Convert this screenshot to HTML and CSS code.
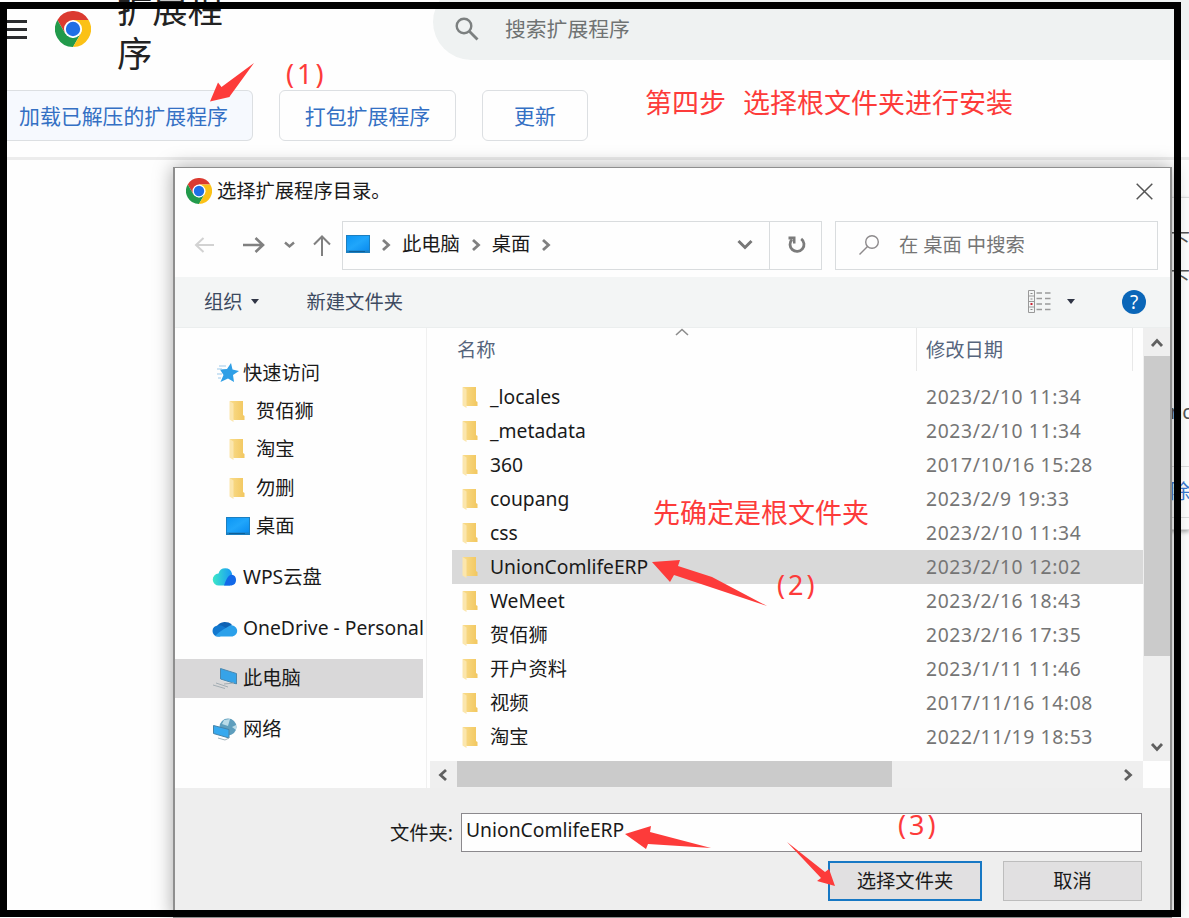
FILE: index.html
```html
<!DOCTYPE html>
<html lang="zh-CN">

<head>
    <meta charset="UTF-8">
    <meta name="viewport" content="width=device-width, initial-scale=1.0">
    <title>扩展程序</title>
    <link rel="stylesheet" href="styles.css">
</head>

<body>

<svg class="sprite">
    <linearGradient id="gold" x1="0" x2="1"><stop offset="0" stop-color="#f9dc8b"/><stop offset="1" stop-color="#f2c75f"/></linearGradient>
    <linearGradient id="sky" x1="0" x2="1" y2="1"><stop offset="0" stop-color="#0c96f4"/><stop offset=".5" stop-color="#20a6fb"/><stop offset="1" stop-color="#0a8cf0"/></linearGradient>
    <linearGradient id="wps" x1="0" x2="1"><stop offset="0" stop-color="#3ce8c8"/><stop offset="1" stop-color="#1899f5"/></linearGradient>
    <symbol id="chrome" viewBox="0 0 48 48">
        <path fill="#db3a30" d="M3.2 12A24 24 0 0 1 44.8 12L24 12L13.6 30Z"/>
        <path fill="#229a4b" d="M3.2 12L13.6 30L24 36L34.4 30L24 48A24 24 0 0 1 3.2 12Z"/>
        <path fill="#fbc116" d="M44.8 12A24 24 0 0 1 24 48L34.4 30L36 24L24 12Z"/>
        <circle cx="24" cy="24" r="12" fill="#fff"/>
        <circle cx="24" cy="24" r="9.6" fill="#1f6fe5"/>
    </symbol>
    <symbol id="folder" viewBox="0 0 16 22">
        <path fill="url(#gold)" d="M1 1H14V15L15.5 16V20H5L1 19Z"/>
        <path fill="#fbe6ad" d="M.5 1L4.5 3.5V22L.5 19.5Z"/>
    </symbol>
    <symbol id="desktop" viewBox="0 0 24 18">
        <path fill="#1c7fc0" d="M0 0H24V18H0Z"/>
        <path fill="url(#sky)" d="M1 1H23V15.5H1Z"/>
        <path fill="#0e5f98" d="M3 16H19V17H3Z"/>
    </symbol>
    <symbol id="chev" viewBox="0 0 10 14"><path d="M2 2L7.5 7L2 12" fill="none" stroke="currentColor" stroke-width="2.8"/></symbol>
</svg>

<div class="page">
    <header>
        <svg class="menu" viewBox="0 0 20 20"><path d="M0 1.5H20M0 9.5H20M0 17.500H20" stroke="#2b2c2e" stroke-width="2.8"/></svg>
        <svg class="logo"><use href="#chrome"/></svg>
        <h1>扩展程序</h1>
        <div class="page-search">
            <svg viewBox="0 0 24 24"><circle cx="9" cy="9" r="7.3" fill="none" stroke="#7c8080" stroke-width="2.4"/><path d="M14.3 14.3L22.5 22.5" stroke="#7c8080" stroke-width="2.8"/></svg>
            <span>搜索扩展程序</span>
        </div>
    </header>
    <div class="page-tools">
        <button class="load">加载已解压的扩展程序</button>
        <button class="pack">打包扩展程序</button>
        <button class="update">更新</button>
    </div>
    <main>
        <div class="card">
            <p>下</p>
            <p>下</p>
            <p class="id">nc</p>
            <p class="remove">除</p>
        </div>
    </main>
</div>

<div class="dialog">
    <div class="title-bar">
        <svg class="title-icon"><use href="#chrome"/></svg>
        <span>选择扩展程序目录。</span>
        <svg class="close" viewBox="0 0 17 17"><path d="M.7.7L16.3 16.3M16.3.7L.7 16.3" stroke="#555" stroke-width="1.5"/></svg>
    </div>

    <div class="nav">
        <svg class="arrows" viewBox="0 0 140 24" fill="none">
            <path d="M22 12H4M11.500 5L4 12L11.500 19" stroke="#d2d2d2" stroke-width="2"/>
            <path d="M51 12H71M63.500 5L71 12L63.500 19" stroke="#808080" stroke-width="2.6"/>
            <path d="M93 9.500L97.500 13.500L102 9.500" stroke="#808080" stroke-width="2.4"/>
            <path d="M130 23V4M122 11.500L130 3.500L138 11.500" stroke="#808080" stroke-width="2"/>
        </svg>
        <div class="address">
            <svg class="desk"><use href="#desktop"/></svg>
            <svg class="sep"><use href="#chev"/></svg>
            <span>此电脑</span>
            <svg class="sep"><use href="#chev"/></svg>
            <span>桌面</span>
            <svg class="sep"><use href="#chev"/></svg>
            <svg class="drop" viewBox="0 0 16 12"><path d="M1.500 2L8 8.500L14.500 2" fill="none" stroke="#777" stroke-width="3"/></svg>
        </div>
        <div class="refresh">
            <svg viewBox="0 0 20 20"><path d="M14.200 3.800A7 7 0 1 1 5 4.500" fill="none" stroke="#7b7b7b" stroke-width="2.8"/><path d="M1.500 1.500H8.500V8.500H6V4.500H1.500Z" fill="#7b7b7b"/></svg>
        </div>
        <div class="dialog-search">
            <svg viewBox="0 0 20 20" fill="none" stroke="#8d8a8c" stroke-width="1.4"><circle cx="13" cy="7" r="6.300"/><path d="M8.500 11.500L.5 19.500"/></svg>
            <span>在 桌面 中搜索</span>
        </div>
    </div>

    <div class="toolbar">
        <span>组织</span>
        <i class="caret"></i>
        <span class="new">新建文件夹</span>
        <svg class="view" viewBox="0 0 23 23">
            <path d="M.5.5H6.500V22.500H.5ZM.5 6H6.500M.5 11.500H6.500M.5 17H6.500" fill="none" stroke="#999"/>
            <path d="M8.500 3H14M17 3H22.500M8.500 8.500H14M17 8.500H22.500M8.500 14H14M17 14H22.500M8.500 19.500H14M17 19.500H22.500" stroke="#9a9a9a" stroke-width="1.400"/>
            <path d="M2.500 3.500H4.500M2.500 9H4.500M2.500 19.500H4.500" stroke="#888"/>
            <path d="M2.500 14H4.500" stroke="#c23" stroke-width="2"/>
        </svg>
        <i class="caret view-caret"></i>
        <span class="help">?</span>
    </div>

    <div class="browser">
        <ul class="sidebar">
            <li><svg class="star" viewBox="0 0 23 20"><path fill="#2f9fe6" d="M14 0L15.500 6.500L22 8L16 12L17 19L11 15.500L3.500 19L6.500 12L3 6.500L10 6Z"/><path d="M2 3H9M0 6H5M0 11H5M1 15H4" stroke="#9cc9ea"/></svg>快速访问</li>
            <li class="sub"><svg class="folder"><use href="#folder"/></svg>贺佰狮</li>
            <li class="sub"><svg class="folder"><use href="#folder"/></svg>淘宝</li>
            <li class="sub"><svg class="folder"><use href="#folder"/></svg>勿删</li>
            <li class="sub desk-item"><svg class="desk"><use href="#desktop"/></svg>桌面</li>
            <li class="root"><svg class="cloud" viewBox="0 0 26 18"><path fill="url(#wps)" d="M7 17.500A6 6 0 0 1 6.500 5.500A7 7 0 0 1 20 5.500L18 17.500Z"/><path fill="#1268e8" d="M12 17.500C14 12 16 7 19.500 6.500A5.600 5.600 0 0 1 19.500 17.500Z"/></svg>WPS云盘</li>
            <li class="root"><svg class="cloud" viewBox="0 0 26 18"><path fill="#0f62b4" d="M5 7A9 8 0 0 1 20 6L14 12Z"/><path fill="#1278cf" d="M6 17.500A5.500 5.500 0 0 1 6 6.500C9 5.500 12 8 16 10L8 17.500Z"/><path fill="#2ba0ea" d="M3 17C8 12 14 9 18 6.500A5.800 5.500 0 0 1 20.500 17.500H6Z"/></svg>OneDrive - Personal</li>
            <li class="root current"><svg class="pc" viewBox="0 0 26 23"><path fill="#e6ebee" d="M8 1L25 6V18L8 13Z"/><path fill="#36a3e8" stroke="#4c87ad" d="M8.500 1.500L24.500 6.500V17L8.500 12Z"/><path d="M1 18L13 21.500M4 16L16 20M12 17L22 16" stroke="#a3adb3"/></svg>此电脑</li>
            <li class="root"><svg class="pc" viewBox="0 0 26 23"><circle cx="16" cy="9" r="8.500" fill="#5e9ebd"/><path fill="#b9dbe8" d="M12 2L18 1L16 8L10 6ZM20 9L24 7V12Z"/><path fill="#36a9ef" stroke="#4683a8" d="M1.500 7.500L17 11.500V20L1.500 15.500Z"/><path d="M6 20L13 22L17 20" fill="none" stroke="#a3b4bc"/></svg>网络</li>
        </ul>

        <div class="files">
            <div class="list">
                <svg class="sort" viewBox="0 0 14 8"><path d="M1 7L7 1.500L13 7" fill="none" stroke="#8c8c8c" stroke-width="1.600"/></svg>
                <div class="row head"><span class="name">名称</span><span class="date">修改日期</span></div>
                <div class="row"><svg class="folder"><use href="#folder"/></svg><span class="name">_locales</span><span class="date">2023/2/10 11:34</span></div>
                <div class="row"><svg class="folder"><use href="#folder"/></svg><span class="name">_metadata</span><span class="date">2023/2/10 11:34</span></div>
                <div class="row"><svg class="folder"><use href="#folder"/></svg><span class="name">360</span><span class="date">2017/10/16 15:28</span></div>
                <div class="row"><svg class="folder"><use href="#folder"/></svg><span class="name">coupang</span><span class="date">2023/2/9 19:33</span></div>
                <div class="row"><svg class="folder"><use href="#folder"/></svg><span class="name">css</span><span class="date">2023/2/10 11:34</span></div>
                <div class="row selected"><svg class="folder"><use href="#folder"/></svg><span class="name">UnionComlifeERP</span><span class="date">2023/2/10 12:02</span></div>
                <div class="row"><svg class="folder"><use href="#folder"/></svg><span class="name">WeMeet</span><span class="date">2023/2/16 18:43</span></div>
                <div class="row"><svg class="folder"><use href="#folder"/></svg><span class="name">贺佰狮</span><span class="date">2023/2/16 17:35</span></div>
                <div class="row"><svg class="folder"><use href="#folder"/></svg><span class="name">开户资料</span><span class="date">2023/1/11 11:46</span></div>
                <div class="row"><svg class="folder"><use href="#folder"/></svg><span class="name">视频</span><span class="date">2017/11/16 14:08</span></div>
                <div class="row"><svg class="folder"><use href="#folder"/></svg><span class="name">淘宝</span><span class="date">2022/11/19 18:53</span></div>
            </div>
            <div class="vscroll">
                <svg class="up"><use href="#chev"/></svg>
                <div class="thumb"></div>
                <svg class="down"><use href="#chev"/></svg>
            </div>
            <div class="hscroll">
                <svg class="left"><use href="#chev"/></svg>
                <div class="thumb"></div>
                <svg class="right"><use href="#chev"/></svg>
            </div>
        </div>
    </div>

    <div class="footer">
        <div class="field"><label>文件夹:</label><div class="input">UnionComlifeERP</div></div>
        <div class="buttons">
            <button class="primary">选择文件夹</button>
            <button>取消</button>
        </div>
    </div>
</div>

<!-- red notes drawn over everything -->
<div class="note note-step"><span>第四步</span><span>选择根文件夹进行安装</span></div>
<div class="note note-root">先确定是根文件夹</div>
<div class="note num note-1">(1)</div>
<div class="note num note-2">(2)</div>
<div class="note num note-3">(3)</div>
<svg class="pointers" viewBox="0 0 1189 918" fill="#fd3b3a">
    <path d="M254 63L230 96L229.500 97L210 101.500L218 82.500L221.500 87Z"/>
    <path d="M652 562L680 560L678 566L712 577L767 606L674 575L670 582Z"/>
    <path d="M625 834L651 826L650 832L711 848L648 844L646 849Z"/>
    <path d="M787 842L825 872L829 869L835 886L817 881L821 878Z"/>
</svg>
<div class="frame"></div>

</body>
</html>
```
FILE: styles.css
```css
* {
    box-sizing: border-box;
}

body {
    margin: 0;
    width: 1189px;
    height: 918px;
    position: relative;
    overflow: hidden;
    background: #fefefe;
    color: #1a1a1a;
    font-family: "Noto Sans", "Noto Sans CJK SC", sans-serif;
    font-size: 19.3px;
    line-height: 30px;
    white-space: nowrap;
}

svg {
    display: block;
    flex: none;
}

button {
    font: inherit;
    padding: 0;
}

.sprite {
    position: absolute;
    width: 0;
    height: 0;
}

/* extensions page */

header {
    display: flex;
    align-items: flex-start;
    height: 90px;
    padding-left: 7px;
}

.menu {
    width: 20px;
    height: 20px;
    margin-top: 20px;
}

.logo {
    width: 36px;
    height: 36px;
    margin: 11px 0 0 28px;
}

h1 {
    width: 130px;
    margin: -13px 0 0 26px;
    font-size: 35.300px;
    font-weight: 400;
    line-height: 44px;
    white-space: normal;
    color: #222;
}

.page-search {
    flex: 1;
    display: flex;
    align-items: center;
    height: 76px;
    margin: -16px 0 0 186px;
    padding: 14px 0 0 22px;
    border-radius: 38px 0 0 38px;
    background: #eff2f2;
    color: #6f7373;
    font-size: 20.800px;
}

.page-search svg {
    width: 24px;
    height: 24px;
    margin-right: 26px;
}

.page-tools {
    display: flex;
    gap: 26px;
    height: 70px;
    border-bottom: 3px solid #ececec;
}

.page-tools button {
    height: 51px;
    border: 1px solid #dcdfe2;
    border-radius: 6px;
    background: #fefefe;
    color: #3470c4;
    font-size: 20.900px;
}

.page-tools .load {
    width: 253px;
    padding-left: 19px;
    border-left: 0;
    background: #f6f9fe;
    text-align: left;
}

.page-tools .pack {
    width: 177px;
}

.page-tools .update {
    width: 106px;
}

main {
    display: flex;
    justify-content: flex-end;
}

.card {
    width: 19px;
    height: 333px;
    margin-top: 37px;
    padding-top: 28px;
    border: solid #ddd;
    border-width: 1px 0;
    box-shadow: 0 2px 4px #aaa;
    color: #555;
    font-size: 20px;
}

.card p {
    margin: 0 0 8px;
}

.card .id {
    margin-top: 103px;
}

.card .remove {
    margin-top: 39px;
    padding: 10px 0;
    border: solid #ddd;
    border-width: 1px 0;
    color: #3a78d0;
}

/* folder dialog */

.dialog {
    position: absolute;
    left: 173px;
    top: 167px;
    width: 999px;
    height: 751px;
    display: flex;
    flex-direction: column;
    border: 2px solid #8e8e8e;
    border-width: 1px 2px;
    background: #fefefe;
    box-shadow: 0 0 18px rgba(0, 0, 0, 0.35);
}

.title-bar {
    display: flex;
    align-items: center;
    height: 46px;
    padding: 0 17px 0 11px;
}

.title-icon {
    width: 26px;
    height: 26px;
    margin-right: 5px;
}

.close {
    width: 17px;
    height: 17px;
    margin-left: auto;
}

.nav {
    display: flex;
    align-items: center;
    height: 63px;
    padding: 0 12px 1px 17px;
}

.arrows {
    width: 140px;
    height: 24px;
    margin-right: 10px;
}

.address,
.refresh,
.dialog-search {
    display: flex;
    align-items: center;
    height: 49px;
    border: 1px solid #d9dcde;
}

.address {
    width: 428px;
    padding-left: 3px;
}

.address span {
    margin-top: -2px;
}

.desk {
    width: 24px;
    height: 18px;
}

.address .desk {
    margin-top: -2px;
}

.sep {
    width: 10px;
    height: 14px;
    margin: 0 11px;
    color: #808080;
}

.address .drop {
    width: 16px;
    height: 12px;
    margin-left: auto;
    margin-right: 16px;
}

.refresh {
    width: 53px;
    margin: 0 13px 0 -1px;
    padding-left: 2px;
    justify-content: center;
}

.refresh svg {
    width: 20px;
    height: 20px;
}

.dialog-search {
    flex: 1;
    padding-left: 23px;
    color: #757575;
}

.dialog-search svg {
    width: 20px;
    height: 20px;
    margin-right: 20px;
}

.toolbar {
    display: flex;
    align-items: center;
    height: 51px;
    padding: 0 24px 1px 29px;
    border-bottom: 1px solid #ebeeee;
    background: #f3f5f5;
    color: #3d4a60;
}

.caret {
    margin-left: 8px;
    border: 4.500px solid transparent;
    border-top: 5px solid #303545;
    border-bottom: 0;
}

.new {
    margin-left: 48px;
}

.view {
    width: 23px;
    height: 23px;
    margin-left: auto;
}

.view-caret {
    margin-left: 16px;
}

.help {
    width: 24px;
    height: 24px;
    margin-left: 47px;
    border-radius: 50%;
    background: #0a66b8;
    color: #fff;
    font-size: 19px;
    line-height: 24px;
    text-align: center;
}

.browser {
    display: flex;
    height: 460px;
}

.sidebar {
    width: 248px;
    margin: 0 3px 0 0;
    padding: 26px 0 0;
    overflow: hidden;
    list-style: none;
}

.sidebar li {
    display: flex;
    align-items: center;
    height: 38.200px;
    padding-left: 42px;
}

.sidebar .sub {
    padding-left: 54px;
}

.sidebar .sub .folder {
    margin-right: 11px;
}

.sidebar .desk-item {
    padding-left: 51px;
}

.sidebar .desk-item .desk {
    margin-right: 6px;
}

.sidebar .root {
    margin-top: 12.700px;
    padding-left: 37px;
}

.sidebar .current {
    background: #d9d8d9;
}

.star {
    width: 23px;
    height: 20px;
    margin-right: 3px;
}

.folder {
    width: 16px;
    height: 22px;
}

.row .folder {
    margin: 0 1px 0 -1px;
}

.cloud {
    width: 26px;
    height: 18px;
    margin-right: 5px;
}

.pc {
    width: 26px;
    height: 23px;
    margin-right: 5px;
}

.files {
    flex: 1;
    display: grid;
    grid-template: 433px 27px / 1fr 27px;
    border-left: 1px solid #f0f0f0;
}

.list {
    position: relative;
    padding-left: 25px;
}

.sort {
    position: absolute;
    left: 248px;
    top: 0;
    width: 14px;
    height: 8px;
}

.row {
    display: flex;
    align-items: center;
    height: 34px;
    padding-left: 11px;
}

.row .name {
    width: 436px;
    margin-left: 11px;
}

.row .date {
    color: #757575;
    letter-spacing: 0.63px;
}

.row.selected {
    background: #d9d9d9;
}

.row.head {
    align-items: stretch;
    height: 43px;
    margin-bottom: 9px;
    padding-left: 5px;
    color: #56657c;
    line-height: 43px;
}

.head .name {
    width: 460px;
    margin-left: 0;
    border-right: 1px solid #e8e8e8;
}

.row.head .date {
    width: 216px;
    padding-left: 9px;
    border-right: 1px solid #e8e8e8;
    color: #56657c;
    letter-spacing: 0;
}

.vscroll,
.hscroll {
    display: flex;
    align-items: center;
    background: #efefef;
    color: #606060;
}

.vscroll {
    flex-direction: column;
}

.vscroll .thumb {
    width: 26px;
    height: 300px;
    margin: 6px 0 auto;
    background: #cbcbcb;
}

.vscroll svg,
.hscroll svg {
    width: 10px;
    height: 14px;
}

.up {
    margin-top: 8px;
    transform: rotate(-90deg);
}

.down {
    margin-bottom: 7px;
    transform: rotate(90deg);
}

.hscroll {
    margin-left: 3px;
    padding: 0 10px 0 8px;
}

.hscroll .thumb {
    width: 435px;
    height: 26px;
    margin: 0 auto 1px 9px;
    background: #cbcbcb;
}

.left {
    transform: scaleX(-1);
}

.footer {
    flex: 1;
    padding: 25px 28px 0 0;
    background: #eee;
}

.field,
.buttons {
    display: flex;
    align-items: center;
    justify-content: flex-end;
}

.field label {
    margin-right: 8px;
}

.input {
    width: 681px;
    height: 39px;
    padding-left: 4px;
    border: 1px solid #8b898d;
    background: #fefefe;
    line-height: 32px;
}

.buttons {
    gap: 21px;
    margin-top: 9px;
}

.buttons button {
    width: 139px;
    height: 40px;
    border: 1px solid #bdbdbd;
    background: #e1e0e1;
    color: #1a1a1a;
}

.buttons .primary {
    width: 154px;
    border: 2px solid #1778c4;
}

/* notes */

.note {
    position: absolute;
    color: #fd3b3a;
    font-size: 27px;
    line-height: 36px;
}

.note-step {
    left: 645px;
    top: 85px;
    display: flex;
    gap: 17px;
}

.num {
    letter-spacing: 3px;
}

.note-root {
    left: 653px;
    top: 495px;
}

.note-1 {
    left: 286px;
    top: 56px;
}

.note-2 {
    left: 777px;
    top: 567px;
}

.note-3 {
    left: 898px;
    top: 807px;
}

.pointers {
    position: absolute;
    left: 0;
    top: 0;
    width: 1189px;
    height: 918px;
}

.frame {
    position: absolute;
    left: 0;
    top: 2px;
    width: 1181px;
    height: 915px;
    border: 7px solid #000;
}
```
